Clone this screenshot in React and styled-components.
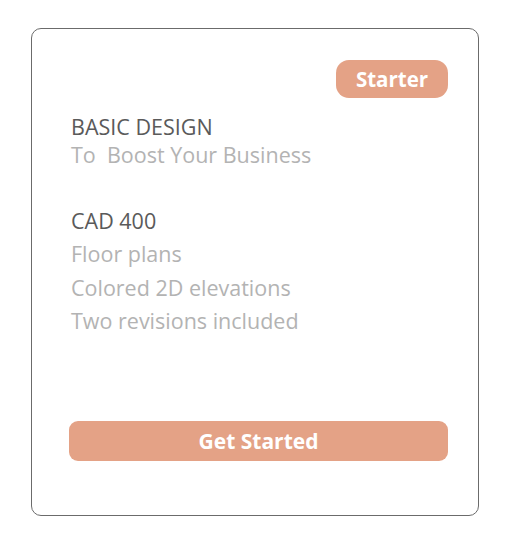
import React from "react";
import styled, { createGlobalStyle } from "styled-components";

const Global = createGlobalStyle`
  body {
    margin: 0;
    background: #ffffff;
    font-family: "Open Sans", Lato, sans-serif;
  }
`;

export default function App() {
  return (
    <>
      <Global />
      <Page>
        <Card>
          <BadgeRow>
            <Badge>Starter</Badge>
          </BadgeRow>
          <Body>
            <Heading>BASIC DESIGN</Heading>
            <Muted>To&nbsp; Boost Your Business</Muted>
            <Price>CAD 400</Price>
            <Feature>Floor plans</Feature>
            <Feature>Colored 2D elevations</Feature>
            <Feature>Two revisions included</Feature>
          </Body>
          <Action>Get Started</Action>
        </Card>
      </Page>
    </>
  );
}

const Page = styled.div`
  padding: 28px 0 0 31px;
`;

const Card = styled.div`
  box-sizing: border-box;
  width: 448px;
  height: 488px;
  border: 1px solid #6b6b6b;
  border-radius: 10px;
  padding: 31px 30px 0 39px;
  display: flex;
  flex-direction: column;
`;

const BadgeRow = styled.div`
  display: flex;
  justify-content: flex-end;
`;

const Badge = styled.span`
  box-sizing: border-box;
  width: 112px;
  height: 38px;
  border-radius: 13px;
  background: #e4a286;
  color: #fff;
  font-weight: 700;
  font-size: 20.5px;
  display: flex;
  align-items: center;
  justify-content: center;
`;

const Body = styled.div`
  display: flex;
  flex-direction: column;
  margin-top: 15px;
  font-size: 21.5px;
`;

const Heading = styled.div`
  color: #5a5a5a;
  line-height: 28px;
`;

const Muted = styled.div`
  color: #b3b3b3;
  line-height: 28px;
`;

const Price = styled.div`
  color: #5a5a5a;
  line-height: 33px;
  margin-top: 35px;
`;

const Feature = styled.div`
  color: #b3b3b3;
  line-height: 33.5px;
`;

const Action = styled.button`
  margin-top: auto;
  margin-bottom: 54px;
  margin-left: -2px;
  height: 40px;
  width: 379px;
  border: none;
  border-radius: 9px;
  background: #e4a286;
  color: #fff;
  font-family: inherit;
  font-weight: 700;
  font-size: 21px;
  padding: 0;
`;
